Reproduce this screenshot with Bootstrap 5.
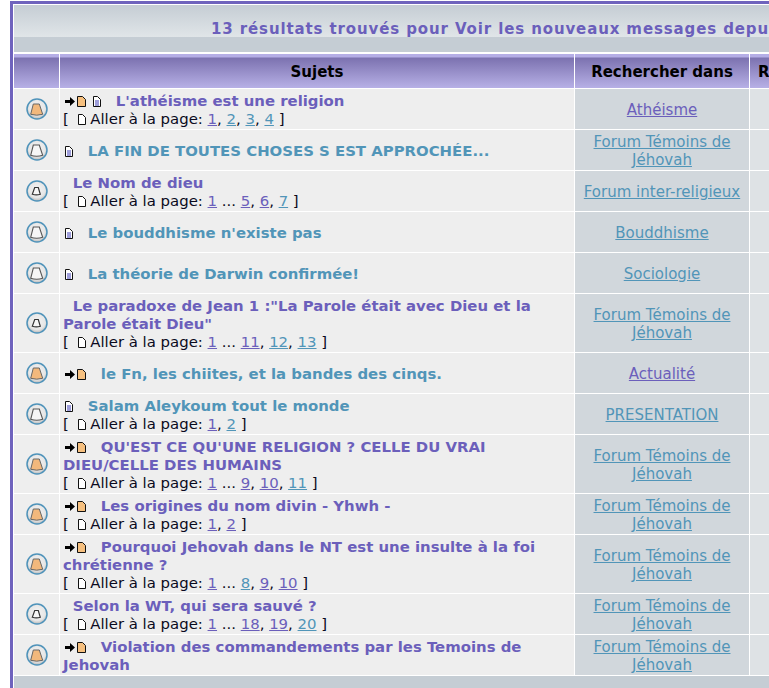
<!DOCTYPE html>
<html lang="fr"><head><meta charset="utf-8"><title>Résultats</title>
<link href="https://cdn.jsdelivr.net/npm/bootstrap@5.3.0/dist/css/bootstrap.min.css" rel="stylesheet">
<style>
html,body{height:688px;overflow:hidden;background:#fff}
body{font-family:"DejaVu Sans",sans-serif;font-size:15px;line-height:18px;color:#000}
.frame{margin:1px 0 0 10px;border:solid #6f63bd;border-width:3px 0 0 3px;padding:1px 0 0 1px;width:1100px;height:700px}
.band{height:47px;background:linear-gradient(#c5cdd4 0,#e0e5e8 32px,#c5cdd4 32px,#c5cdd4 100%);color:#6b5fbb;font-weight:700;font-size:15px;letter-spacing:.88px;padding:15px 0 0 197px;white-space:nowrap;margin-bottom:2px}
.rtab{border-collapse:separate;border-spacing:0;table-layout:fixed;width:1086px}
.rtab th{height:35px;padding:2px 0 0;text-align:center;font-weight:700;font-size:15px;color:#000;background:linear-gradient(#b5aee6 0,#b5aee6 3px,#7c72b0 4px,#b7b0e6 100%);border-right:1px solid #fff;border-bottom:1px solid #fff}
.rtab td{padding:3px 3px 1px;border-right:1px solid #fff;border-bottom:1px solid #fff;background:#eee;height:41px;vertical-align:middle}
.rtab td.ico{text-align:center;padding:0}
.rtab td.frm{background:#d1d7dc;text-align:center;padding:3px 4px 1px}
.rtab td.rep{background:#dee2e5}
.ttl{font-weight:700;font-size:14.9px;text-decoration:none}
.pu{color:#6b5fbb}.te{color:#5195b8}
.pg{font-size:14.9px;color:#0a0a20;white-space:nowrap}
.gap{display:inline-block;width:5px}
.bell{width:24px;height:24px;display:block;margin:0 auto}
.mi{display:inline-block;vertical-align:-1px;height:11px;margin:0 5px 0 2px}
.mi.tight{margin-right:7px}
.mi.second{margin-left:0}
.mi.inpg{margin:0 0 0 4px}
.tail{height:30px;background:#c5cdd4}
</style></head><body>
<svg width="0" height="0" class="position-absolute">
<defs>
<radialGradient id="gl" cx=".5" cy=".42" r=".58"><stop offset="0" stop-color="#f4f4f4"/><stop offset=".72" stop-color="#e6e6e6"/><stop offset="1" stop-color="#b5b5b5"/></radialGradient>
<symbol id="bo" viewBox="0 0 24 24"><circle cx="12" cy="12" r="10" fill="url(#gl)" stroke="#4f93ba" stroke-width="1.5"/><path d="M8.300 7h6l3.400 10.300q-6 1.800-12 0z" fill="#f2b87c" stroke="#666" stroke-width="1"/></symbol>
<symbol id="bg" viewBox="0 0 24 24"><circle cx="12" cy="12" r="10" fill="url(#gl)" stroke="#4f93ba" stroke-width="1.5"/><path d="M8.300 7h6l3.400 10.300q-6 1.800-12 0z" fill="#f6f6f6" stroke="#555" stroke-width="1.100"/></symbol>
<symbol id="bs" viewBox="0 0 24 24"><circle cx="12" cy="12" r="10" fill="url(#gl)" stroke="#4f93ba" stroke-width="1.5"/><path d="M9.700 8.500h3.600l2 6.800q-4 1.200-8 0z" fill="#f6f6f6" stroke="#333" stroke-width="1.200"/></symbol>
<symbol id="ar" viewBox="0 0 21 11"><path d="M0 4h5V1l5 4.500L5 10V7H0z" fill="#000"/><path d="M12.500.5h5l3 3v7h-8z" fill="#f6c07f" stroke="#111"/></symbol>
<symbol id="dc" viewBox="0 0 8 11"><path d="M.5.500h4l3 3v7h-7z" fill="#fff" stroke="#111"/><path d="M2 5h4M2 7h4M2 9h4" stroke="#3d3db5"/></symbol>
<symbol id="pd" viewBox="0 0 8 11"><path d="M.5.500h4l3 3v7h-7z" fill="#fff" stroke="#111"/></symbol>
</defs></svg>
<div class="frame">
<div class="band">13 résultats trouvés pour Voir les nouveaux messages depuis votre dernière visite</div>
<table class="rtab">
<colgroup><col style="width:46px"><col style="width:515px"><col style="width:175px"><col></colgroup>
<thead><tr><th></th><th>Sujets</th><th>Rechercher dans</th><th class="text-start ps-2">Réponses</th></tr></thead>
<tbody>
<tr><td class="ico"><svg class="bell"><use href="#bo"/></svg></td><td><svg class="mi tight" width="21" height="11"><use href="#ar"/></svg><svg class="mi second" width="8" height="11"><use href="#dc"/></svg><span class="gap"></span> <a class="ttl pu" href="#">L'athéisme est une religion</a><br><span class="pg">[ <svg class="mi inpg" width="8" height="11"><use href="#pd"/></svg> Aller à la page: <a class="pu" href="#">1</a>, <a class="te" href="#">2</a>, <a class="te" href="#">3</a>, <a class="te" href="#">4</a> ]</span></td><td class="frm"><a class="pu" href="#">Athéisme</a></td><td class="rep"></td></tr>
<tr><td class="ico"><svg class="bell"><use href="#bg"/></svg></td><td><svg class="mi" width="8" height="11"><use href="#dc"/></svg><span class="gap"></span> <a class="ttl te" href="#">LA FIN DE TOUTES CHOSES S EST APPROCHÉE...</a></td><td class="frm"><a class="te" href="#">Forum Témoins de Jéhovah</a></td><td class="rep"></td></tr>
<tr><td class="ico"><svg class="bell"><use href="#bs"/></svg></td><td><span class="gap"></span> <a class="ttl pu" href="#">Le Nom de dieu</a><br><span class="pg">[ <svg class="mi inpg" width="8" height="11"><use href="#pd"/></svg> Aller à la page: <a class="pu" href="#">1</a> ... <a class="pu" href="#">5</a>, <a class="pu" href="#">6</a>, <a class="te" href="#">7</a> ]</span></td><td class="frm"><a class="te" href="#">Forum inter-religieux</a></td><td class="rep"></td></tr>
<tr><td class="ico"><svg class="bell"><use href="#bg"/></svg></td><td><svg class="mi" width="8" height="11"><use href="#dc"/></svg><span class="gap"></span> <a class="ttl te" href="#">Le bouddhisme n'existe pas</a></td><td class="frm"><a class="te" href="#">Bouddhisme</a></td><td class="rep"></td></tr>
<tr><td class="ico"><svg class="bell"><use href="#bg"/></svg></td><td><svg class="mi" width="8" height="11"><use href="#dc"/></svg><span class="gap"></span> <a class="ttl te" href="#">La théorie de Darwin confirmée!</a></td><td class="frm"><a class="te" href="#">Sociologie</a></td><td class="rep"></td></tr>
<tr><td class="ico"><svg class="bell"><use href="#bs"/></svg></td><td><span class="gap"></span> <a class="ttl pu" href="#">Le paradoxe de Jean 1 :"La Parole était avec Dieu et la<br>Parole était Dieu"</a><br><span class="pg">[ <svg class="mi inpg" width="8" height="11"><use href="#pd"/></svg> Aller à la page: <a class="pu" href="#">1</a> ... <a class="pu" href="#">11</a>, <a class="te" href="#">12</a>, <a class="te" href="#">13</a> ]</span></td><td class="frm"><a class="te" href="#">Forum Témoins de Jéhovah</a></td><td class="rep"></td></tr>
<tr><td class="ico"><svg class="bell"><use href="#bo"/></svg></td><td><svg class="mi" width="21" height="11"><use href="#ar"/></svg><span class="gap"></span> <a class="ttl te" href="#">le Fn, les chiites, et la bandes des cinqs.</a></td><td class="frm"><a class="pu" href="#">Actualité</a></td><td class="rep"></td></tr>
<tr><td class="ico"><svg class="bell"><use href="#bg"/></svg></td><td><svg class="mi" width="8" height="11"><use href="#dc"/></svg><span class="gap"></span> <a class="ttl te" href="#">Salam Aleykoum tout le monde</a><br><span class="pg">[ <svg class="mi inpg" width="8" height="11"><use href="#pd"/></svg> Aller à la page: <a class="pu" href="#">1</a>, <a class="te" href="#">2</a> ]</span></td><td class="frm"><a class="te" href="#">PRESENTATION</a></td><td class="rep"></td></tr>
<tr><td class="ico"><svg class="bell"><use href="#bo"/></svg></td><td><svg class="mi" width="21" height="11"><use href="#ar"/></svg><span class="gap"></span> <a class="ttl pu" href="#">QU'EST CE QU'UNE RELIGION ? CELLE DU VRAI<br>DIEU/CELLE DES HUMAINS</a><br><span class="pg">[ <svg class="mi inpg" width="8" height="11"><use href="#pd"/></svg> Aller à la page: <a class="pu" href="#">1</a> ... <a class="pu" href="#">9</a>, <a class="pu" href="#">10</a>, <a class="te" href="#">11</a> ]</span></td><td class="frm"><a class="te" href="#">Forum Témoins de Jéhovah</a></td><td class="rep"></td></tr>
<tr><td class="ico"><svg class="bell"><use href="#bo"/></svg></td><td><svg class="mi" width="21" height="11"><use href="#ar"/></svg><span class="gap"></span> <a class="ttl pu" href="#">Les origines du nom divin - Yhwh -</a><br><span class="pg">[ <svg class="mi inpg" width="8" height="11"><use href="#pd"/></svg> Aller à la page: <a class="pu" href="#">1</a>, <a class="pu" href="#">2</a> ]</span></td><td class="frm"><a class="te" href="#">Forum Témoins de Jéhovah</a></td><td class="rep"></td></tr>
<tr><td class="ico"><svg class="bell"><use href="#bo"/></svg></td><td><svg class="mi" width="21" height="11"><use href="#ar"/></svg><span class="gap"></span> <a class="ttl pu" href="#">Pourquoi Jehovah dans le NT est une insulte à la foi<br>chrétienne ?</a><br><span class="pg">[ <svg class="mi inpg" width="8" height="11"><use href="#pd"/></svg> Aller à la page: <a class="pu" href="#">1</a> ... <a class="te" href="#">8</a>, <a class="pu" href="#">9</a>, <a class="pu" href="#">10</a> ]</span></td><td class="frm"><a class="te" href="#">Forum Témoins de Jéhovah</a></td><td class="rep"></td></tr>
<tr><td class="ico"><svg class="bell"><use href="#bs"/></svg></td><td><span class="gap"></span> <a class="ttl pu" href="#">Selon la WT, qui sera sauvé ?</a><br><span class="pg">[ <svg class="mi inpg" width="8" height="11"><use href="#pd"/></svg> Aller à la page: <a class="pu" href="#">1</a> ... <a class="pu" href="#">18</a>, <a class="pu" href="#">19</a>, <a class="te" href="#">20</a> ]</span></td><td class="frm"><a class="te" href="#">Forum Témoins de Jéhovah</a></td><td class="rep"></td></tr>
<tr><td class="ico"><svg class="bell"><use href="#bo"/></svg></td><td><svg class="mi" width="21" height="11"><use href="#ar"/></svg><span class="gap"></span> <a class="ttl pu" href="#">Violation des commandements par les Temoins de<br>Jehovah</a></td><td class="frm"><a class="te" href="#">Forum Témoins de Jéhovah</a></td><td class="rep"></td></tr>
</tbody></table>
<div class="tail"></div>
</div>
</body></html>
